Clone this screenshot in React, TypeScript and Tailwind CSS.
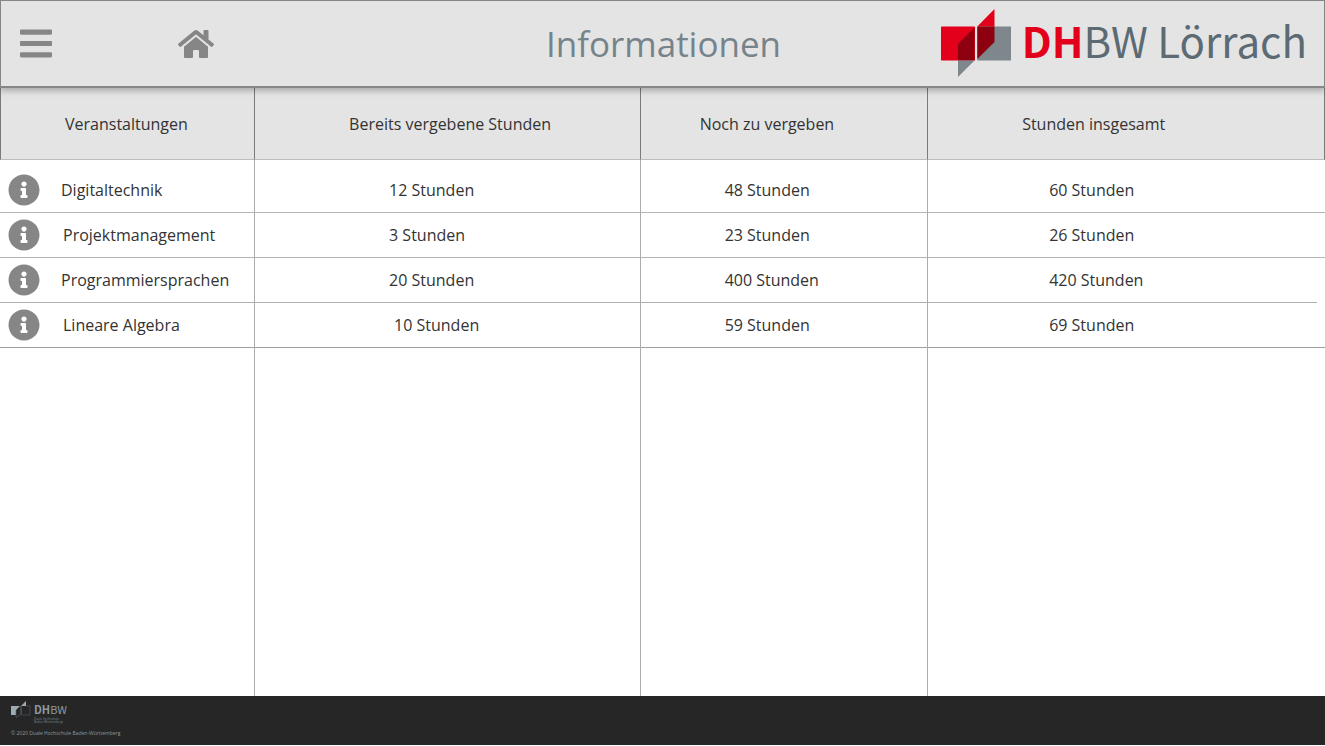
import { FaBars, FaHome, FaInfoCircle } from "react-icons/fa";

type Row = {
  name: string;
  assigned: string;
  open: string;
  total: string;
  lead: string;
  nameInset: string;
  assignedInset: string;
  line: string;
  lastLine: string;
};

const rows: Row[] = [
  {
    name: "Digitaltechnik",
    assigned: "12 Stunden",
    open: "48 Stunden",
    total: "60 Stunden",
    lead: "h-[53px] pt-2",
    nameInset: "pl-[21px]",
    assignedInset: "pl-[134px]",
    line: "border-[#b4b4b4]",
    lastLine: "",
  },
  {
    name: "Projektmanagement",
    assigned: "3 Stunden",
    open: "23 Stunden",
    total: "26 Stunden",
    lead: "h-[45px]",
    nameInset: "pl-[23px]",
    assignedInset: "pl-[134px]",
    line: "border-[#b4b4b4]",
    lastLine: "",
  },
  {
    name: "Programmiersprachen",
    assigned: "20 Stunden",
    open: "400 Stunden",
    total: "420 Stunden",
    lead: "h-[45px]",
    nameInset: "pl-[21px]",
    assignedInset: "pl-[134px]",
    line: "border-[#b0b0b0]",
    lastLine: "mr-2",
  },
  {
    name: "Lineare Algebra",
    assigned: "10 Stunden",
    open: "59 Stunden",
    total: "69 Stunden",
    lead: "h-[45px]",
    nameInset: "pl-[23px]",
    assignedInset: "pl-[139px]",
    line: "border-[#a0a0a0]",
    lastLine: "",
  },
];

function LogoMark() {
  return (
    <svg viewBox="0 0 70 68" className="h-[68px] w-[70px] shrink-0" aria-hidden="true">
      <rect x="0" y="17.5" width="34" height="34" rx="0.7" fill="#e2001a" />
      <rect x="36.3" y="17.5" width="34" height="34" rx="0.7" fill="#7d878c" />
      <polygon points="17,35 33.5,18.5 33.5,51.5 17,51.5" fill="#8d0010" />
      <polygon points="17,51.5 33.5,51.5 17,68" fill="#7d878c" />
      <polygon points="36.3,17.5 53.5,0 53.5,17.5" fill="#e2001a" />
      <polygon points="36.3,17.5 53.5,17.5 53.5,33 36.3,50" fill="#8d0010" />
    </svg>
  );
}

function SmallLogoMark() {
  return (
    <svg viewBox="0 0 20 17" className="h-[17px] w-5 shrink-0" aria-hidden="true">
      <polygon points="0,5 9,5 5,9 5,14 0,14" fill="#9eabb2" />
      <polygon points="10,5 15,0 15,5" fill="#9eabb2" />
      <path d="M5 9v7.500l4.500-3V5M10.500 5v9h8.500V5h-4" fill="none" stroke="#566066" strokeWidth="0.6" />
    </svg>
  );
}

export default function App() {
  const cell = "p-0 align-top font-normal";
  const rule = "border-r border-[#acacac]";
  const head = "h-[72px] border-b border-b-[#bcbcbc] border-r border-r-[#7a7a7a] p-0 text-left font-normal";

  return (
    <div className="flex min-h-screen flex-col bg-white pb-px font-['Open_Sans',sans-serif] text-base text-[#333]">
      <header className="relative flex h-[88px] items-center justify-between border border-b-2 border-[#868686] bg-[#e4e4e4] pr-[17px] pl-[19px] shadow-[0_3px_6px_rgba(0,0,0,0.25)]">
        <nav className="flex flex-1 items-center gap-[126px] text-[#868686]">
          <button type="button" aria-label="Menü">
            <FaBars className="h-[37px] w-8" />
          </button>
          <a href="#" aria-label="Startseite">
            <FaHome className="h-8 w-9" />
          </a>
        </nav>
        <h1 className="text-[35px] leading-10 text-[#76838a]">Informationen</h1>
        <div className="flex flex-1 items-center justify-end gap-[11px] pb-0.5">
          <LogoMark />
          <span className="pb-1.5 font-['Noto_Sans_CJK_SC',sans-serif] text-[42px] leading-[60px] whitespace-nowrap text-[#5c6b73]">
            <span className="font-bold text-[#e2001a]">DH</span>BW Lörrach
          </span>
        </div>
      </header>

      <main className="flex flex-1">
        <table className="w-full table-fixed border-separate border-spacing-0">
          <colgroup>
            <col className="w-[19.25%]" />
            <col className="w-[29.1%]" />
            <col className="w-[21.7%]" />
            <col />
          </colgroup>
          <thead className="bg-[#e4e4e4]">
            <tr>
              <th scope="col" className={`${head} border-l border-l-[#7a7a7a] pl-16`}>Veranstaltungen</th>
              <th scope="col" className={`${head} pl-[94px]`}>Bereits vergebene Stunden</th>
              <th scope="col" className={`${head} pl-[59px]`}>Noch zu vergeben</th>
              <th scope="col" className={`${head} pl-[94px]`}>Stunden insgesamt</th>
            </tr>
          </thead>
          <tbody>
            {rows.map((row) => {
              const line = `flex items-center border-b ${row.line} ${row.lead}`;
              return (
                <tr key={row.name}>
                  <th scope="row" className={`${cell} ${rule} text-left`}>
                    <div className={`${line} pl-2`}>
                      <button type="button" aria-label={`Info zu ${row.name}`} className="text-[#868686]">
                        <FaInfoCircle className="size-8" />
                      </button>
                      <span className={row.nameInset}>{row.name}</span>
                    </div>
                  </th>
                  <td className={`${cell} ${rule}`}>
                    <div className={`${line} ${row.assignedInset}`}>{row.assigned}</div>
                  </td>
                  <td className={`${cell} ${rule}`}>
                    <div className={`${line} pl-[84px]`}>{row.open}</div>
                  </td>
                  <td className={cell}>
                    <div className={`${line} ${row.lastLine} pl-[121px]`}>{row.total}</div>
                  </td>
                </tr>
              );
            })}
            <tr className="h-full" aria-hidden="true">
              <td className={`${cell} ${rule}`} />
              <td className={`${cell} ${rule}`} />
              <td className={`${cell} ${rule}`} />
              <td className={cell} />
            </tr>
          </tbody>
        </table>
      </main>

      <footer className="flex h-[49px] flex-col gap-1 bg-[#262626] pt-[5px] pl-[11px] text-[#8d999f]">
        <div className="flex gap-[3px]">
          <SmallLogoMark />
          <div className="flex flex-col">
            <span className="font-['Noto_Sans_CJK_SC',sans-serif] text-[11px] leading-[17px]">
              <span className="font-bold">DH</span>BW
            </span>
            <span className="text-[3px] leading-[3px] text-[#7c878c]">Duale Hochschule</span>
            <span className="text-[3px] leading-[3px] text-[#7c878c]">Baden-Württemberg</span>
          </div>
        </div>
        <p className="text-[5px] leading-[10px]">© 2020 Duale Hochschule Baden-Württemberg</p>
      </footer>
    </div>
  );
}
